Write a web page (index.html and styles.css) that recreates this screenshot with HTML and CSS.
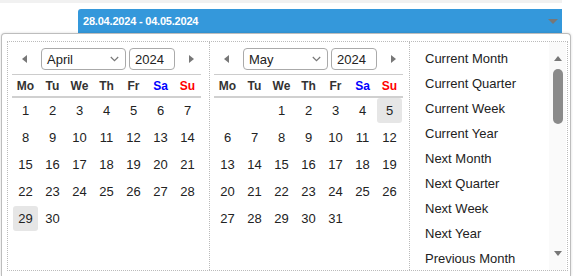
FILE: index.html
```html
<!DOCTYPE html>
<html>
<head>
<meta charset="utf-8">
<link rel="stylesheet" href="styles.css">
</head>
<body>
<div class="topband"></div>
<div class="bar"><span class="range">28.04.2024 - 04.05.2024</span><span class="caret"></span></div>
<div class="popup">
  <div class="inner">
    <div class="month first">
      <div class="mhead">
        <span class="nav"><span class="tri-left"></span></span>
        <div class="sel"><span>April</span><svg width="9" height="6" viewBox="0 0 9 6"><path d="M0.8 1 L4.5 4.6 L8.2 1" fill="none" stroke="#777" stroke-width="1.2"/></svg></div>
        <div class="year">2024</div>
        <span class="nav"><span class="tri-right"></span></span>
      </div>
      <div class="weekdays">
        <span>Mo</span><span>Tu</span><span>We</span><span>Th</span><span>Fr</span><span class="sa">Sa</span><span class="su">Su</span>
      </div>
      <div class="days">
        <span>1</span><span>2</span><span>3</span><span>4</span><span>5</span><span>6</span><span>7</span>
        <span>8</span><span>9</span><span>10</span><span>11</span><span>12</span><span>13</span><span>14</span>
        <span>15</span><span>16</span><span>17</span><span>18</span><span>19</span><span>20</span><span>21</span>
        <span>22</span><span>23</span><span>24</span><span>25</span><span>26</span><span>27</span><span>28</span>
        <span class="hl">29</span><span>30</span>
      </div>
    </div>
    <div class="month second">
      <div class="mhead">
        <span class="nav"><span class="tri-left"></span></span>
        <div class="sel"><span>May</span><svg width="9" height="6" viewBox="0 0 9 6"><path d="M0.8 1 L4.5 4.6 L8.2 1" fill="none" stroke="#777" stroke-width="1.2"/></svg></div>
        <div class="year">2024</div>
        <span class="nav"><span class="tri-right"></span></span>
      </div>
      <div class="weekdays">
        <span>Mo</span><span>Tu</span><span>We</span><span>Th</span><span>Fr</span><span class="sa">Sa</span><span class="su">Su</span>
      </div>
      <div class="days">
        <span></span><span></span><span>1</span><span>2</span><span>3</span><span>4</span><span class="hl">5</span>
        <span>6</span><span>7</span><span>8</span><span>9</span><span>10</span><span>11</span><span>12</span>
        <span>13</span><span>14</span><span>15</span><span>16</span><span>17</span><span>18</span><span>19</span>
        <span>20</span><span>21</span><span>22</span><span>23</span><span>24</span><span>25</span><span>26</span>
        <span>27</span><span>28</span><span>29</span><span>30</span><span>31</span>
      </div>
    </div>
    <div class="ranges">
      <ul class="list">
        <li>Current Month</li>
        <li>Current Quarter</li>
        <li>Current Week</li>
        <li>Current Year</li>
        <li>Next Month</li>
        <li>Next Quarter</li>
        <li>Next Week</li>
        <li>Next Year</li>
        <li>Previous Month</li>
      </ul>
      <div class="scroll">
        <span class="tri-up"></span>
        <span class="thumb"></span>
        <span class="spacer"></span>
        <span class="tri-down"></span>
      </div>
    </div>
  </div>
</div>
</body>
</html>
```
FILE: styles.css
```css
* { box-sizing: border-box; }
html, body { margin: 0; padding: 0; background: #fff; }
body {
  font-family: "Liberation Sans", Arial, sans-serif;
  font-size: 12px;
  color: #222;
  width: 573px;
  height: 276px;
  overflow: hidden;
}
.topband {
  width: 562px;
  height: 3px;
  background: #f1f1f1;
}
.bar {
  margin: 6px 0 0 78px;
  width: 484px;
  height: 24px;
  background: #3498db;
  border-radius: 3px 0 0 0;
  display: flex;
  align-items: center;
  justify-content: space-between;
  padding: 0 4px 0 5px;
  color: #fff;
  font-weight: bold;
  font-size: 11px;
  letter-spacing: -0.2px;
}
.caret {
  width: 0; height: 0;
  border-left: 5px solid transparent;
  border-right: 5px solid transparent;
  border-top: 5px solid #777;
}
.popup {
  margin-left: 1px;
  width: 570px;
  height: 243px;
  border: 1px solid #bdbdbd;
  border-bottom: none;
  border-radius: 4px 4px 0 0;
  box-shadow: 0 0 3px rgba(0,0,0,0.15);
  padding: 7px 2px 0 5px;
  background: #fff;
}
.inner {
  display: flex;
  height: 230px;
  border: 1px dotted #bbb;
}
.month {
  border-right: 1px dotted #bbb;
}
.month.first { width: 202px; }
.month.second { width: 200px; }
.mhead {
  display: flex;
  align-items: center;
  height: 22px;
  margin-top: 6px;
  margin-bottom: 4px;
}
.nav {
  width: 33px;
  height: 22px;
  display: flex;
  align-items: center;
  justify-content: center;
  flex: none;
}
.mhead .nav:last-child { width: 32px; }
.tri-left {
  width: 0; height: 0;
  border-top: 4.5px solid transparent;
  border-bottom: 4.5px solid transparent;
  border-right: 5px solid #777;
}
.tri-right {
  width: 0; height: 0;
  border-top: 4.5px solid transparent;
  border-bottom: 4.5px solid transparent;
  border-left: 5px solid #777;
}
.sel {
  width: 85px;
  height: 22px;
  border: 1px solid #aaa;
  border-radius: 4px;
  display: flex;
  align-items: center;
  justify-content: space-between;
  padding: 0 6px 0 5px;
  font-size: 13px;
  color: #222;
}
.sel svg { display: block; }
.year {
  width: 46px;
  height: 22px;
  margin-left: 3px;
  border: 1px solid #aaa;
  border-radius: 4px;
  display: flex;
  align-items: center;
  padding-left: 5px;
  font-size: 13px;
}
.weekdays, .days {
  display: grid;
  grid-template-columns: repeat(7, 27px);
  margin-left: 4px;
  width: 189px;
}
.weekdays {
  border-top: 1px solid #ccc;
  border-bottom: 2px solid #d0d0d0;
  height: 24px;
  align-items: center;
  font-weight: bold;
  color: #333;
}
.weekdays span { text-align: center; }
.weekdays .sa { color: #0000ff; }
.weekdays .su { color: #ff0000; }
.days {
  grid-auto-rows: 27px;
}
.days span {
  display: flex;
  align-items: center;
  justify-content: center;
  margin: 0 1px 2px 1px;
  border-radius: 3px;
  font-size: 13px;
}
.days .hl { background: #e6e6e6; }
.ranges {
  flex: 1;
  display: flex;
}
.list {
  flex: 1;
  list-style: none;
  margin: 0;
  padding: 4px 0 0 15px;
  overflow: hidden;
}
.list li {
  height: 25px;
  line-height: 25px;
  font-size: 13px;
  white-space: nowrap;
}
.scroll {
  width: 17px;
  margin-right: 1px;
  background: #fafafa;
  display: flex;
  flex-direction: column;
  align-items: center;
  padding: 14px 0 14px;
}
.tri-up {
  width: 0; height: 0;
  border-left: 4px solid transparent;
  border-right: 4px solid transparent;
  border-bottom: 5px solid #777;
}
.tri-down {
  width: 0; height: 0;
  border-left: 4px solid transparent;
  border-right: 4px solid transparent;
  border-top: 5px solid #777;
}
.thumb {
  margin-top: 8px;
  width: 10px;
  height: 55px;
  border-radius: 5px;
  background: #8a8a8a;
}
.spacer { flex: 1; }
```
